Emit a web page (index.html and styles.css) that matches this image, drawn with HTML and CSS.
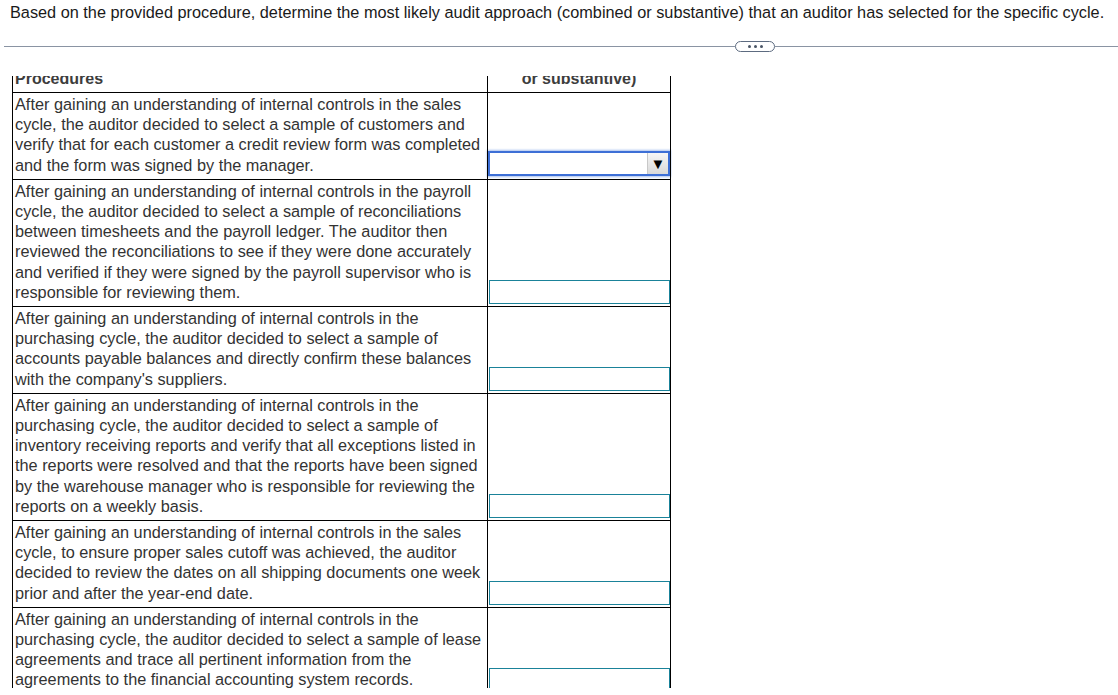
FILE: index.html
```html
<!DOCTYPE html>
<html>
<head>
<meta charset="utf-8">
<link rel="stylesheet" href="styles.css">
</head>
<body>
<p class="prompt">Based on the provided procedure, determine the most likely audit approach (combined or substantive) that an auditor has selected for the specific cycle.</p>
<div class="divider">
  <span class="line"></span>
  <button class="more" type="button"><span></span><span></span><span></span></button>
  <span class="line"></span>
</div>
<div class="viewport">
  <table class="grid">
    <thead>
      <tr>
        <th class="proc-h">Procedures</th>
        <th class="ans-h">Audit approach (combined<br>or substantive)</th>
      </tr>
    </thead>
    <tbody>
      <tr>
        <td class="proc">After gaining an understanding of internal controls in the sales cycle, the auditor decided to select a sample of customers and verify that for each customer a credit review form was completed and the form was signed by the manager.</td>
        <td class="ans"><div class="select"><span class="arrow">▼</span></div></td>
      </tr>
      <tr>
        <td class="proc">After gaining an understanding of internal controls in the payroll cycle, the auditor decided to select a sample of reconciliations between timesheets and the payroll ledger. The auditor then reviewed the reconciliations to see if they were done accurately and verified if they were signed by the payroll supervisor who is responsible for reviewing them.</td>
        <td class="ans"><div class="box"></div></td>
      </tr>
      <tr>
        <td class="proc">After gaining an understanding of internal controls in the purchasing cycle, the auditor decided to select a sample of accounts payable balances and directly confirm these balances with the company's suppliers.</td>
        <td class="ans"><div class="box"></div></td>
      </tr>
      <tr>
        <td class="proc">After gaining an understanding of internal controls in the purchasing cycle, the auditor decided to select a sample of inventory receiving reports and verify that all exceptions listed in the reports were resolved and that the reports have been signed by the warehouse manager who is responsible for reviewing the reports on a weekly basis.</td>
        <td class="ans"><div class="box"></div></td>
      </tr>
      <tr>
        <td class="proc">After gaining an understanding of internal controls in the sales cycle, to ensure proper sales cutoff was achieved, the auditor decided to review the dates on all shipping documents one week prior and after the year-end date.</td>
        <td class="ans"><div class="box"></div></td>
      </tr>
      <tr>
        <td class="proc">After gaining an understanding of internal controls in the purchasing cycle, the auditor decided to select a sample of lease agreements and trace all pertinent information from the agreements to the financial accounting system records.</td>
        <td class="ans"><div class="box"></div></td>
      </tr>
    </tbody>
  </table>
</div>
</body>
</html>
```
FILE: styles.css
```css
html, body {
  margin: 0;
  padding: 0;
  background: #fff;
}
body {
  font-family: "Liberation Sans", Arial, sans-serif;
  color: #222;
}
.prompt {
  margin: 0;
  padding: 3px 0 0 10px;
  font-size: 16.3px;
  line-height: 18px;
  color: #1a1a1a;
  white-space: nowrap;
}
.divider {
  display: flex;
  align-items: center;
  margin: 19px 0 0 4px;
  height: 12px;
}
.divider .line {
  flex: 1;
  height: 1px;
  background: #8a94a3;
}
.divider .line:first-child {
  flex: 0 0 731px;
}
.more {
  width: 40px;
  height: 11px;
  border: 1px solid #5d6b80;
  border-radius: 6px;
  background: #fff;
  padding: 0;
  margin: 0;
  display: flex;
  align-items: center;
  justify-content: center;
  gap: 3px;
}
.more span {
  width: 3px;
  height: 3px;
  border-radius: 50%;
  background: #4a5566;
}
.viewport {
  margin: 24px 0 0 12px;
  width: 660px;
  height: 612px;
  overflow: hidden;
}
.grid {
  border-collapse: collapse;
  margin-top: -42px;
  table-layout: fixed;
  width: 659px;
}
.grid th, .grid td {
  border: 1px solid #000;
}
.grid th {
  font-size: 16px;
  font-weight: bold;
  line-height: 18px;
  color: #3d3d3d;
  padding: 0 2px 4px;
  vertical-align: bottom;
  border-top: none;
}
.proc-h {
  width: 470px;
  text-align: left;
}
.ans-h {
  text-align: center;
}
.proc {
  font-size: 16.3px;
  line-height: 20.2px;
  color: #333;
  padding: 1px 2px 4px 2px;
  vertical-align: top;
}
.ans {
  vertical-align: bottom;
  padding: 0 0 2px 1px;
}
.box {
  height: 22px;
  border: 1px solid #1a8299;
}
.select {
  height: 21px;
  margin: 0 0 1px -1px;
  border: 2px solid #3d6fd6;
  box-shadow: 0 0 2px 1px #a9c0ee;
  background: #fff;
  display: flex;
  justify-content: flex-end;
}
.arrow {
  width: 20px;
  background: linear-gradient(#f6f6f6, #d8d8d8);
  border-left: 1px solid #c8c8c8;
  font-size: 15px;
  line-height: 21px;
  text-align: center;
  color: #000;
}
```
